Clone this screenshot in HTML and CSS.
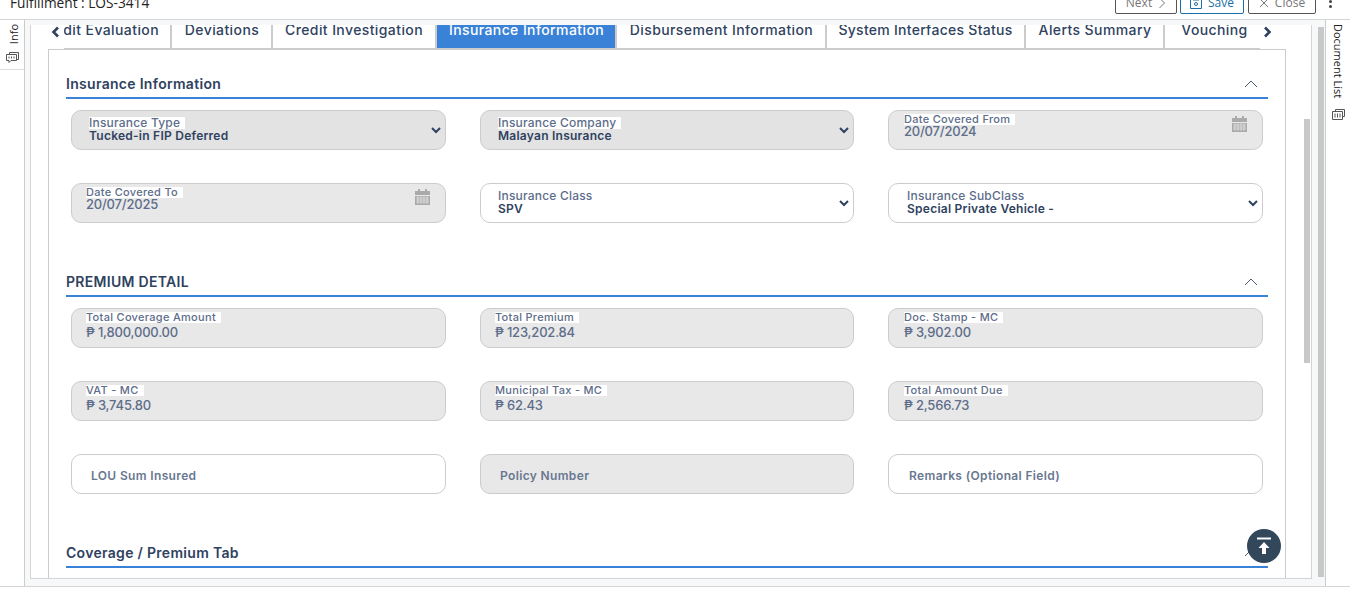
FILE: index.html
```html
<!DOCTYPE html>
<html lang="en">
<head>
    <meta charset="UTF-8">
    <meta name="viewport" content="width=device-width, initial-scale=1.0">
    <title>Fulfillment : LOS-3414</title>
    <link rel="stylesheet" href="styles.css">
</head>
<body>
    <header class="topbar">
        <div class="page-title">Fulfillment : LOS-3414</div>
        <div class="top-actions">
            <button class="top-btn top-btn-next">Next
                <svg width="8" height="12" viewBox="0 0 8 12"><path d="M1.500 1l5 5-5 5" fill="none" stroke="#777" stroke-width="1"/></svg>
            </button>
            <button class="top-btn top-btn-save">
                <svg width="12" height="12" viewBox="0 0 12 12"><path d="M.5.5h11v11H.5zM3 .5v2.500h6V.5" fill="none" stroke="#1b6fa8"/><circle cx="6" cy="7" r="1.500" fill="none" stroke="#1b6fa8"/></svg>
                Save
            </button>
            <button class="top-btn top-btn-close">
                <svg width="10" height="10" viewBox="0 0 10 10"><path d="M1 1l8 8M9 1l-8 8" fill="none" stroke="#777"/></svg>
                Close
            </button>
            <span class="kebab"><i></i><i></i><i></i></span>
        </div>
    </header>

    <div class="workspace">
        <aside class="rail rail-left">
            <div class="rail-item">
                <span class="rail-label rail-label-info">Info</span>
                <svg class="rail-icon" width="13" height="11" viewBox="0 0 13 11"><path d="M3.500 2.500V.5h9v7h-2M.5 2.500h10v6H5l-2 2v-2H.5z" fill="#fff" stroke="#555"/><path d="M3 4.500v2M5.500 4.500v2M8 4.500v2" stroke="#555"/></svg>
            </div>
        </aside>

        <main class="main">
            <div class="inner">
                <div class="tabs-row">
                    <span class="tab-arrow tab-arrow-left">
                        <svg width="9" height="12" viewBox="0 0 9 12"><path d="M7 1.500L2.500 6 7 10.500" fill="none" stroke="#2f4260" stroke-width="2.600"/></svg>
                    </span>
                    <div class="tabs">
                        <div class="tab tab-first">Credit Evaluation</div>
                        <div class="tab tab-dev">Deviations</div>
                        <div class="tab tab-ci">Credit Investigation</div>
                        <div class="tab tab-active">Insurance Information</div>
                        <div class="tab tab-dis">Disbursement Information</div>
                        <div class="tab tab-sys">System Interfaces Status</div>
                        <div class="tab tab-alert">Alerts Summary</div>
                        <div class="tab tab-vouch">Vouching</div>
                    </div>
                    <span class="tab-arrow">
                        <svg width="9" height="12" viewBox="0 0 9 12"><path d="M2 1.500L6.500 6 2 10.500" fill="none" stroke="#2f4260" stroke-width="2.600"/></svg>
                    </span>
                </div>

                <div class="pane-wrap">
                    <div class="pane">
                        <section class="section">
                            <div class="section-head">
                                <h2>Insurance Information</h2>
                                <svg width="14" height="8" viewBox="0 0 14 8"><path d="M1 7l6-6 6 6" fill="none" stroke="#4a5a72" stroke-width="1"/></svg>
                            </div>
                            <div class="field-grid">
                                <div class="field field-select">
                                    <div class="field-text"><span class="label label-lg">Insurance Type</span><span class="value-strong">Tucked-in FIP Deferred</span></div>
                                    <svg class="chev" width="10" height="7" viewBox="0 0 10 7"><path d="M1 1l4 4 4-4" fill="none" stroke="#2f4260" stroke-width="2"/></svg>
                                </div>
                                <div class="field field-select">
                                    <div class="field-text"><span class="label label-lg">Insurance Company</span><span class="value-strong">Malayan Insurance</span></div>
                                    <svg class="chev" width="10" height="7" viewBox="0 0 10 7"><path d="M1 1l4 4 4-4" fill="none" stroke="#2f4260" stroke-width="2"/></svg>
                                </div>
                                <div class="field field-date">
                                    <div class="field-text"><span class="label">Date Covered From</span><span class="value-date">20/07/2024</span></div>
                                    <svg class="cal" width="15" height="16" viewBox="0 0 15 16"><path d="M0 2h3V0h2v2h5V0h2v2h3v4H0z" fill="#aaa"/><path d="M0 7h15v9H0z" fill="#aaa"/><path d="M1 9h13M1 11h13M1 13h13M3 7v8M6 7v8M9 7v8M12 7v8" stroke="#e8e8e8" stroke-width=".7"/></svg>
                                </div>
                                <div class="field field-date">
                                    <div class="field-text"><span class="label">Date Covered To</span><span class="value-date">20/07/2025</span></div>
                                    <svg class="cal" width="15" height="16" viewBox="0 0 15 16"><path d="M0 2h3V0h2v2h5V0h2v2h3v4H0z" fill="#aaa"/><path d="M0 7h15v9H0z" fill="#aaa"/><path d="M1 9h13M1 11h13M1 13h13M3 7v8M6 7v8M9 7v8M12 7v8" stroke="#e8e8e8" stroke-width=".7"/></svg>
                                </div>
                                <div class="field field-open">
                                    <div class="field-text"><span class="label label-lg">Insurance Class</span><span class="value-strong">SPV</span></div>
                                    <svg class="chev" width="10" height="7" viewBox="0 0 10 7"><path d="M1 1l4 4 4-4" fill="none" stroke="#2f4260" stroke-width="2"/></svg>
                                </div>
                                <div class="field field-open">
                                    <div class="field-text"><span class="label label-lg">Insurance SubClass</span><span class="value-strong">Special Private Vehicle -</span></div>
                                    <svg class="chev" width="10" height="7" viewBox="0 0 10 7"><path d="M1 1l4 4 4-4" fill="none" stroke="#2f4260" stroke-width="2"/></svg>
                                </div>
                            </div>
                        </section>

                        <section class="section section-next">
                            <div class="section-head">
                                <h2>PREMIUM DETAIL</h2>
                                <svg width="14" height="8" viewBox="0 0 14 8"><path d="M1 7l6-6 6 6" fill="none" stroke="#4a5a72" stroke-width="1"/></svg>
                            </div>
                            <div class="field-grid">
                                <div class="field field-amount"><div class="field-text"><span class="label">Total Coverage Amount</span><span class="value-amount">₱ 1,800,000.00</span></div></div>
                                <div class="field field-amount"><div class="field-text"><span class="label">Total Premium</span><span class="value-amount">₱ 123,202.84</span></div></div>
                                <div class="field field-amount"><div class="field-text"><span class="label">Doc. Stamp - MC</span><span class="value-amount">₱ 3,902.00</span></div></div>
                                <div class="field field-amount"><div class="field-text"><span class="label">VAT - MC</span><span class="value-amount">₱ 3,745.80</span></div></div>
                                <div class="field field-amount"><div class="field-text"><span class="label">Municipal Tax - MC</span><span class="value-amount">₱ 62.43</span></div></div>
                                <div class="field field-amount"><div class="field-text"><span class="label">Total Amount Due</span><span class="value-amount">₱ 2,566.73</span></div></div>
                                <div class="field field-input"><span class="placeholder">LOU Sum Insured</span></div>
                                <div class="field field-input field-off"><span class="placeholder">Policy Number</span></div>
                                <div class="field field-input"><span class="placeholder">Remarks (Optional Field)</span></div>
                            </div>
                        </section>

                        <section class="section section-next">
                            <div class="section-head">
                                <h2>Coverage / Premium Tab</h2>
                                <svg width="14" height="8" viewBox="0 0 14 8"><path d="M1 7l6-6 6 6" fill="none" stroke="#4a5a72" stroke-width="1"/></svg>
                            </div>
                        </section>
                    </div>
                    <div class="inner-scroll"><div class="inner-thumb"></div></div>
                </div>
                <button class="to-top">
                    <svg width="16" height="18" viewBox="0 0 16 18"><path d="M1 1.500h14" stroke="#fff" stroke-width="2"/><path d="M8 5l5.500 6H10v6H6v-6H2.500z" fill="#fff"/></svg>
                </button>
            </div>
            <div class="outer-scroll"><div class="outer-thumb"></div></div>
        </main>

        <aside class="rail rail-right">
            <div class="rail-item">
                <span class="rail-label">Document List</span>
                <svg class="rail-icon" width="13" height="11" viewBox="0 0 13 11"><path d="M3.500 2.500V.5h9v7h-2M.5 2.500h10v8H.5z" fill="#fff" stroke="#555"/><path d="M3 4.500v4M5.500 4.500v4M8 4.500v4" stroke="#555"/></svg>
            </div>
        </aside>
    </div>
</body>
</html>
```

FILE: styles.css
```css
/* General Styles */
* {
    box-sizing: border-box;
}
body {
    margin: 0;
    height: 602px;
    overflow: hidden;
    background-color: #fff;
    font-family: Inter, "Open Sans", sans-serif;
    color: #2f4260;
}

/* Top bar */
.topbar {
    height: 20px;
    display: flex;
    justify-content: space-between;
    border-bottom: 1px solid #d4d4d4;
    overflow: hidden;
}
.page-title {
    margin: -6px 0 0 10px;
    font-family: "Open Sans", sans-serif;
    font-size: 13.7px;
    line-height: 18px;
    color: #222;
}
.top-actions {
    display: flex;
    align-items: flex-end;
    height: 14px;
    gap: 3px;
    padding-right: 18px;
}
.top-btn {
    height: 22px;
    padding: 0;
    display: flex;
    align-items: center;
    justify-content: center;
    gap: 6px;
    background: #fff;
    border: 1px solid #555;
    border-radius: 2px;
    font-family: "Open Sans", sans-serif;
    font-size: 12px;
    line-height: 16px;
    color: #777;
}
.top-btn-next {
    width: 62px;
}
.top-btn-save {
    width: 64px;
    border-color: #1b6fa8;
    color: #1b6fa8;
}
.top-btn-close {
    width: 68px;
    margin-left: 1px;
}
.kebab {
    display: flex;
    flex-direction: column;
    gap: 2px;
    margin: 0 0 6px 10px;
}
.kebab i {
    width: 3px;
    height: 3px;
    background: #444;
    border-radius: 50%;
}

/* Frame */
.workspace {
    height: 567px;
    display: flex;
    border-bottom: 1px solid #d4d4d4;
}
.rail {
    width: 25px;
    flex: none;
    background: #fff;
}
.rail-left {
    border-right: 1px solid #ccc;
}
.rail-right {
    border-left: 1px solid #ccc;
}
.rail-item {
    display: flex;
    flex-direction: column;
    align-items: center;
    gap: 10px;
    padding-top: 4px;
}
.rail-left .rail-item {
    height: 50px;
    gap: 8px;
    border-bottom: 1px solid #ddd;
}
.rail-label {
    writing-mode: vertical-rl;
    white-space: nowrap;
    font-family: "Open Sans", sans-serif;
    font-size: 11px;
    line-height: 14px;
    color: #222;
}
.rail-label-info {
    transform: rotate(180deg);
    margin-left: 3px;
}
.rail-right .rail-icon {
    margin-top: 1px;
}
.main {
    flex: 1;
    display: flex;
    background: #f7f8fa;
    padding: 5px 0 0 5px;
    min-width: 0;
}
.inner {
    position: relative;
    width: 1282px;
    height: 554px;
    background: #fff;
    border-left: 1px solid #d4d4d4;
    border-right: 1px solid #d4d4d4;
    border-bottom: 1px solid #d4d4d4;
    overflow: hidden;
}
.outer-scroll {
    flex: 1;
    padding: 2px 1px 0 6px;
}
.outer-thumb {
    height: 550px;
    background: #c8c8c8;
}

/* Tabs */
.tabs-row {
    height: 25px;
    display: flex;
    padding-left: 18px;
}
.tab-arrow {
    width: 15px;
    flex: none;
    padding-top: 1px;
    display: flex;
    justify-content: center;
    align-items: flex-start;
}
.tab-arrow-left {
    justify-content: flex-start;
    padding-left: 2px;
}
.tabs {
    width: 1196px;
    flex: none;
    display: flex;
    overflow: hidden;
    height: 25px;
    border-bottom: 2px solid #ccc;
}
.tab {
    flex: none;
    height: 23px;
    line-height: 10px;
    font-size: 14px;
    font-weight: 500;
    letter-spacing: 0.4px;
    color: #2f4260;
    white-space: nowrap;
    text-align: center;
    border-right: 2px solid #ccc;
}
.tab-first {
    width: 108px;
    padding-right: 11px;
    direction: rtl;
    text-align: right;
}
.tab-dev {
    width: 101px;
    padding-left: 1px;
}
.tab-ci { width: 164px; }
.tab-active {
    width: 180px;
    padding-left: 1px;
    background: #3a82d8;
    color: #fff;
}
.tab-dis {
    width: 210px;
    padding-left: 1px;
}
.tab-sys {
    width: 199px;
    letter-spacing: 0.27px;
}
.tab-alert {
    width: 139px;
    padding-left: 1px;
}
.tab-vouch {
    width: 95px;
    padding-left: 4px;
    border-right: none;
}

/* Pane */
.pane-wrap {
    display: flex;
}
.pane {
    width: 1238px;
    flex: none;
    margin: -1px 0 0 17px;
    height: 540px;
    border-left: 1px solid #ccc;
    border-right: 1px solid #ccc;
    border-top: 1px solid #ccc;
    padding: 0 17px;
    background: #fff;
}
.inner-scroll {
    width: 25px;
    padding: 69px 0 0 18px;
}
.inner-thumb {
    width: 6px;
    height: 244px;
    background: #c8c8c8;
}

/* Sections */
.section {
    padding-top: 24px;
}
.section-next {
    padding-top: 0;
    margin-top: 49px;
}
.section-head {
    height: 25px;
    display: flex;
    justify-content: space-between;
    align-items: flex-start;
    padding-right: 10px;
    border-bottom: 2px solid #3a82d8;
}
.section-head h2 {
    margin: 0;
    font-size: 14px;
    line-height: 20px;
    font-weight: 600;
    letter-spacing: 0.3px;
    color: #2f4260;
}
.section-head svg {
    margin-top: 6px;
}
.field-grid {
    display: grid;
    grid-template-columns: 375px 374px 375px;
    column-gap: 34px;
    row-gap: 33px;
    padding: 11px 0 0 5px;
}

/* Fields */
.field {
    height: 40px;
    display: flex;
    justify-content: space-between;
    border: 1px solid #ccc;
    border-radius: 10px;
    padding: 0 4px 0 17px;
    background: #fff;
}
.field:nth-child(3n) > :first-child {
    margin-left: 1px;
}
.field-text {
    display: flex;
    flex-direction: column;
    align-items: flex-start;
    font-size: 12px;
}
.label {
    background: #fff;
    padding-right: 5px;
    margin-top: 3px;
    font-size: 11px;
    line-height: 11px;
    font-weight: 500;
    letter-spacing: 0.3px;
    color: #5d6d8a;
}
.label-lg {
    margin-top: 6px;
    font-size: 12px;
    line-height: 12px;
    letter-spacing: 0.2px;
}
.value-strong {
    font-size: 12px;
    line-height: 13px;
    font-weight: 600;
    letter-spacing: 0.25px;
    color: #2f4260;
}
.value-date {
    font-size: 13px;
    line-height: 12px;
    font-weight: 500;
    letter-spacing: -0.2px;
    color: #5d6d8a;
}
.value-amount {
    margin-top: 2px;
    font-size: 13px;
    line-height: 15px;
    font-weight: 500;
    letter-spacing: -0.2px;
    color: #5d6d8a;
}
.field-select {
    background: #e3e3e3;
}
.field-date, .field-amount, .field-off {
    background: #e8e8e8;
    padding-left: 14px;
}
.chev {
    margin-top: 16px;
}
.cal {
    margin: 5px 11px 0 0;
}
.field-input {
    align-items: center;
    padding: 3px 0 0 19px;
}
.placeholder {
    font-size: 12px;
    font-weight: 600;
    letter-spacing: 0.35px;
    color: #687890;
}
.to-top {
    position: absolute;
    left: 1216px;
    top: 504px;
    width: 34px;
    height: 34px;
    padding: 0;
    border: none;
    border-radius: 50%;
    background: #33475b;
    display: flex;
    align-items: center;
    justify-content: center;
}
```
